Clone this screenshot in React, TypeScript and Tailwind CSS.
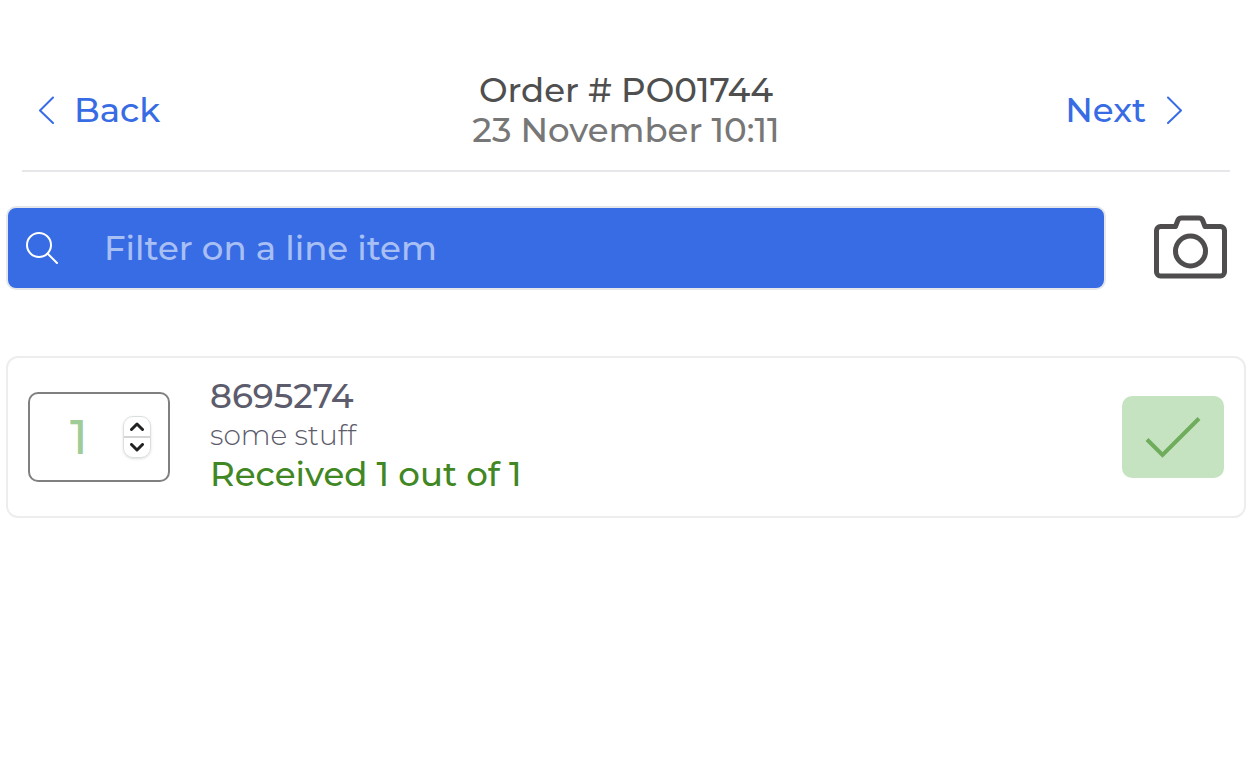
import React, { useState } from 'react';

const ChevronLeft = () => (
  <svg width="18" height="28" viewBox="0 0 18 28" fill="none" stroke="currentColor" strokeWidth="2" strokeLinecap="round" strokeLinejoin="round">
    <path d="M16 1.500 3 14.500 16 27" />
  </svg>
);

const ChevronRight = () => (
  <svg width="18" height="28" viewBox="0 0 18 28" fill="none" stroke="currentColor" strokeWidth="2" strokeLinecap="round" strokeLinejoin="round">
    <path d="M3 1.500 16 14.500 3 27" />
  </svg>
);

const SearchIcon = () => (
  <svg width="34" height="34" viewBox="0 0 34 34" fill="none" stroke="currentColor" strokeWidth="2" strokeLinecap="round">
    <circle cx="14" cy="14" r="12" />
    <path d="m22.8 22.8 9.2 9.2" />
  </svg>
);

const CameraIcon = () => (
  <svg width="74" height="66" viewBox="0 0 74 66" fill="none" stroke="currentColor" strokeWidth="5" strokeLinejoin="round">
    <path d="M6.500 11.500h15l2.300-6A4 4 0 0 1 27.500 3h17.500a4 4 0 0 1 3.700 2.500l2.300 6H66.500a4 4 0 0 1 4 4V57a4 4 0 0 1-4 4H6.500a4 4 0 0 1-4-4V15.500a4 4 0 0 1 4-4Z" />
    <circle cx="36.500" cy="36" r="15" />
  </svg>
);

const CheckIcon = () => (
  <svg width="56" height="42" viewBox="0 0 56 42" fill="none" stroke="currentColor" strokeWidth="4">
    <path d="M2 23.500 17.500 39 54 2.500" />
  </svg>
);

const stepButton = 'flex flex-1 items-center justify-center text-[#222222]';

const Quantity = () => {
  const [quantity, setQuantity] = useState(1);

  return (
    <div className="flex h-[90px] w-[142px] shrink-0 items-center rounded-[10px] border-2 border-[#808080] pr-[17px] pl-10">
      <input
        type="number"
        aria-label="Quantity"
        value={quantity}
        onChange={(e) => setQuantity(Number(e.target.value))}
        className="w-full min-w-0 appearance-none bg-transparent text-5xl font-medium text-[#a0cc98] outline-none [-moz-appearance:textfield] [&::-webkit-inner-spin-button]:appearance-none"
      />
      <div className="flex h-[42px] w-7 shrink-0 flex-col divide-y-2 divide-[#d4d4d4] rounded-[10px] border border-[#dcdfdf] shadow-sm">
        <button type="button" aria-label="Increase" className={stepButton} onClick={() => setQuantity(quantity + 1)}>
          <svg width="14" height="9" viewBox="0 0 14 9" fill="none" stroke="currentColor" strokeWidth="3" strokeLinecap="round" strokeLinejoin="round">
            <path d="m1.500 7.500 5.500-5.500 5.500 5.500" />
          </svg>
        </button>
        <button type="button" aria-label="Decrease" className={stepButton} onClick={() => setQuantity(Math.max(0, quantity - 1))}>
          <svg width="14" height="9" viewBox="0 0 14 9" fill="none" stroke="currentColor" strokeWidth="3" strokeLinecap="round" strokeLinejoin="round">
            <path d="m1.500 1.500 5.500 5.500 5.500-5.500" />
          </svg>
        </button>
      </div>
    </div>
  );
};

const App = () => {
  return (
    <main className="bg-white pt-[70px] pr-3 pb-12 pl-[6px] font-['Montserrat','Inter',sans-serif] text-[34px] leading-10 font-medium">
      <header className="mx-4 grid grid-cols-[1fr_auto_1fr] items-center border-b-2 border-[#e5e7eb] pb-5">
        <a href="#back" className="ml-[15px] flex items-center gap-[19px] justify-self-start text-[#386ce4]">
          <ChevronLeft />
          Back
        </a>
        <h1 className="text-center text-[#4f4f4f]">
          Order # PO01744
          <span className="block text-[#777777]">23 November 10:11</span>
        </h1>
        <a href="#next" className="mr-[47px] flex items-center gap-[19px] justify-self-end text-[#386ce4]">
          Next
          <ChevronRight />
        </a>
      </header>

      <div className="mt-[34px] mr-[18px] flex items-center gap-12">
        <label className="flex h-[84px] flex-1 items-center gap-[45px] rounded-[10px] border-2 border-[#e5e7eb] bg-[#386ce4] px-[17px] text-white">
          <SearchIcon />
          <input
            type="text"
            aria-label="Filter on a line item"
            placeholder="Filter on a line item"
            className="h-full min-w-0 flex-1 bg-transparent outline-none placeholder:text-[#a8bff4]"
          />
        </label>
        <button type="button" aria-label="Scan with camera" className="text-[#4f4d4d]">
          <CameraIcon />
        </button>
      </div>

      <section className="mt-[66px] flex items-center rounded-xl border-2 border-[#ededed] px-5 py-[18px]">
        <Quantity />
        <div className="ml-10 flex-1 pb-1">
          <h2 className="text-[#5c5c6c]">8695274</h2>
          <p className="text-[28px] leading-[38px] font-light text-[#5c5c6c]">some stuff</p>
          <p className="text-[#418724]">Received 1 out of 1</p>
        </div>
        <button type="button" aria-label="Mark as received" className="flex h-[82px] w-[102px] items-center justify-center rounded-[10px] bg-[#c5e3c0] text-[#6fac5c]">
          <CheckIcon />
        </button>
      </section>
    </main>
  );
};

export default App;
